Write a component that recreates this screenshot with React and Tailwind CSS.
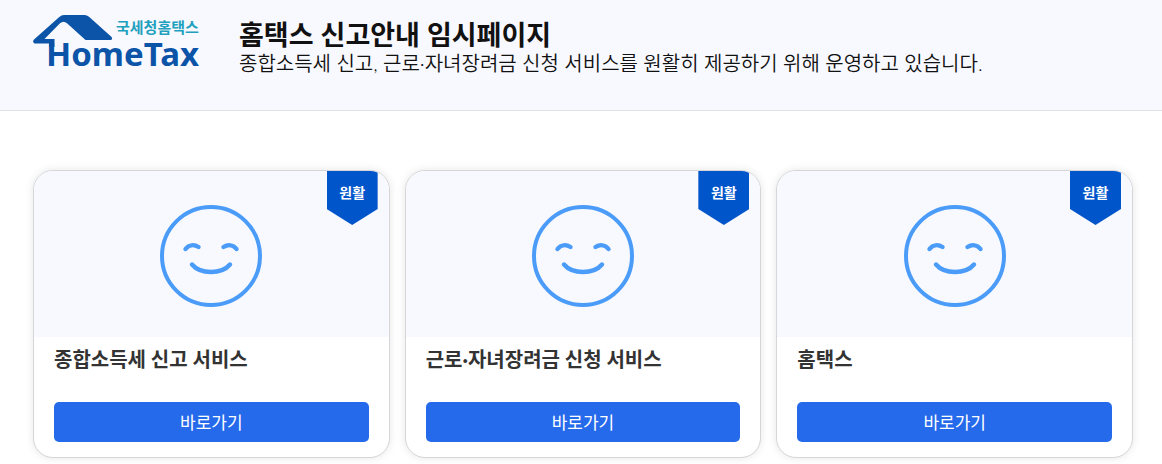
const services = [
  { id: "income", title: "종합소득세 신고 서비스", status: "원활" },
  { id: "incentive", title: "근로·자녀장려금 신청 서비스", status: "원활" },
  { id: "hometax", title: "홈택스", status: "원활" },
];

function Logo() {
  return (
    <svg
      width="168"
      height="62"
      viewBox="0 0 168 62"
      role="img"
      aria-label="국세청홈택스 HomeTax"
      className="shrink-0"
    >
      {/* roof */}
      <path
        fill="#0c54a8"
        d="M1 25.500 26 3.200Q28.500 1 31 1H51.500Q54 1 56 2.800L78.300 22.800Q80.500 25.800 77 26H52.500L34 9.300Q30.500 6 27 9.300L11.500 25H21.500V33H16V29.500H1.500Q-1 28 1 25.500Z"
      />
      <text
        x="83"
        y="19"
        fill="#1fa0bd"
        fontSize="15"
        fontWeight="700"
        fontFamily="'Noto Sans CJK KR', sans-serif"
      >
        국세청홈택스
      </text>
      <text
        x="13"
        y="52"
        fill="#0c54a8"
        fontSize="33"
        fontWeight="700"
        fontFamily="'Noto Sans', 'Open Sans', sans-serif"
      >
        HomeTax
      </text>
    </svg>
  );
}

function SmileFace() {
  return (
    <svg
      width="102"
      height="102"
      viewBox="0 0 102 102"
      fill="none"
      stroke="#4b9cf8"
      strokeWidth="4.400"
      strokeLinecap="round"
      aria-hidden="true"
    >
      <circle cx="51" cy="51" r="49" strokeWidth="4" />
      <path d="M25.500 44C29 39.500 34.500 39.500 38.500 42" />
      <path d="M63.500 42C67.500 39.500 73 39.500 76.500 44" />
      <path d="M32 59.500C40.500 69.500 61.500 69.500 70 59.500" />
    </svg>
  );
}

function ServiceCard({ title, status }) {
  return (
    <section className="overflow-hidden rounded-[20px] border border-[#d6d6d8] bg-white shadow-[0_0_8px_rgba(0,0,0,0.1)]">
      <div className="relative flex justify-center bg-[#f8f9ff] pt-[34px] pb-[30px]">
        <SmileFace />
        <span className="absolute top-0 right-[11px] h-[54px] w-[51px] bg-[#0055cb] pt-[11px] text-center text-sm leading-5 font-bold text-white [clip-path:polygon(0_0,100%_0,100%_38px,50%_100%,0_38px)]">
          {status}
        </span>
      </div>
      <div className="px-5 pt-2 pb-[15px]">
        <h2 className="font-['Lato','Noto_Sans_CJK_KR',sans-serif] text-xl leading-7 font-bold text-[#333]">
          {title}
        </h2>
        <button
          type="button"
          className="mt-[29px] h-10 w-full rounded-[5px] bg-[#256aeb] text-[17px] leading-6 text-white hover:bg-[#1d5bd0]"
        >
          바로가기
        </button>
      </div>
    </section>
  );
}

export default function App() {
  return (
    <div className="min-h-screen bg-white font-['Noto_Sans_CJK_KR',sans-serif]">
      <header className="flex items-start gap-[38px] border-b border-[#dfe0e5] bg-[#f8f9ff] pt-[14px] pr-[29px] pb-[34px] pl-[33px]">
        <Logo />
        <div className="pt-[5px] text-[#111]">
          <h1 className="font-['Noto_Sans','Noto_Sans_CJK_KR',sans-serif] text-[27px] leading-8 font-bold">
            홈택스 신고안내 임시페이지
          </h1>
          <p className="font-['Lato','Noto_Sans_CJK_KR',sans-serif] text-xl leading-6 font-[350]">
            종합소득세 신고, 근로·자녀장려금 신청 서비스를 원활히 제공하기 위해
            운영하고 있습니다.
          </p>
        </div>
      </header>

      <main className="grid grid-cols-3 gap-[15px] pt-[59px] pr-[29px] pl-[33px]">
        {services.map((service) => (
          <ServiceCard
            key={service.id}
            title={service.title}
            status={service.status}
          />
        ))}
      </main>
    </div>
  );
}
